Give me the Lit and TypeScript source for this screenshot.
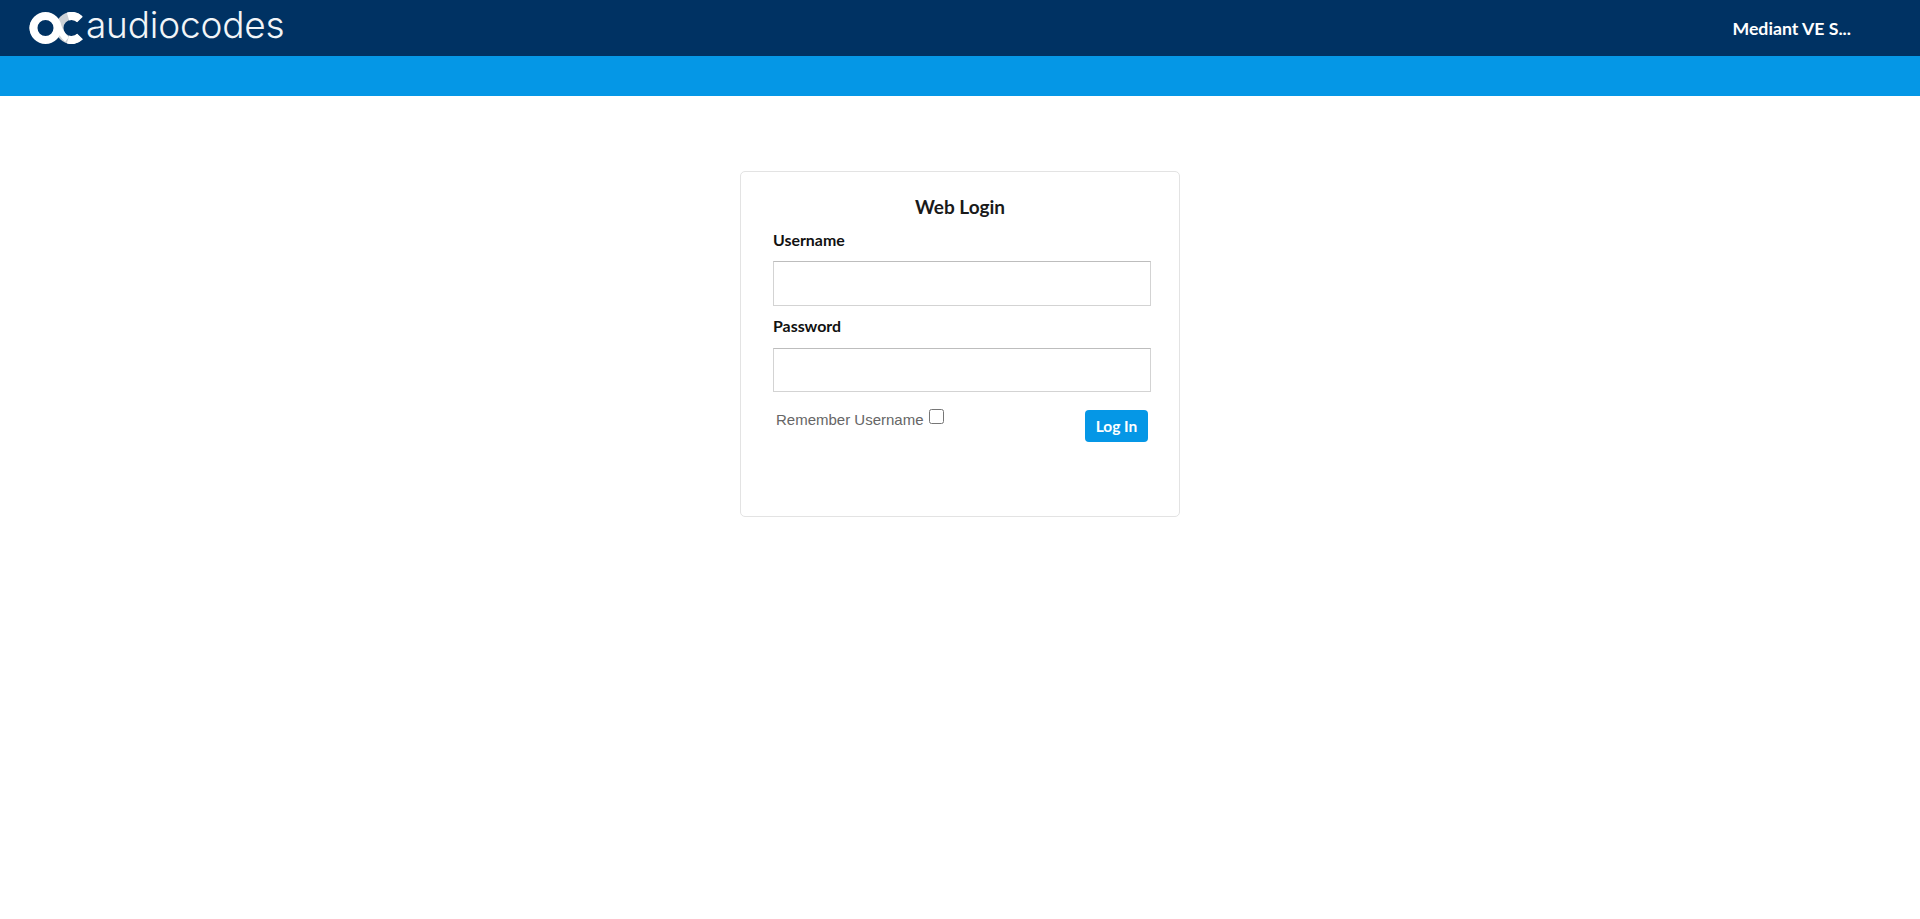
import { LitElement, html, css } from "lit";
import { customElement } from "lit/decorators.js";

@customElement("app-root")
export class AppRoot extends LitElement {
  static styles = css`
    :host { display: block; min-height: 919px; background: #fff; font-family: "Lato", "Open Sans", sans-serif; color: #111; }
    .top { height: 56px; background: #003263; display: flex; align-items: flex-start; justify-content: space-between; }
    .brand { display: flex; align-items: flex-start; padding: 12px 0 0 28px; color: #f2f5f8; }
    .mark { display: block; width: 58px; height: 32px; }
    .word { font-family: "Inter", sans-serif; font-size: 37px; font-weight: 300; line-height: 32px; margin: -3px 0 0 0; letter-spacing: -0.2px; }
    .device { color: #fff; font-size: 17.7px; font-weight: 700; line-height: 20px; margin: 19px 69px 0 0; white-space: nowrap; }
    .band { height: 40px; background: #0597e6; }
    .card { box-sizing: border-box; width: 440px; height: 346px; margin: 75px auto 0; padding: 24px 28px 0 32px; border: 1px solid #e3e3e3; border-radius: 5px; }
    h1 { margin: 0 0 13px; font-size: 19px; line-height: 22px; font-weight: 700; text-align: center; color: #1a1a1a; padding-right: 4px; }
    label.field { display: block; font-size: 15.9px; line-height: 18px; font-weight: 700; margin-bottom: 12px; }
    label.lower { margin-bottom: 13px; }
    input.text { display: block; box-sizing: border-box; width: 378px; height: 45px; margin: 0 0 11px; border: 1px solid #d3d3d3; border-top-color: #bdbdbd; background: #fff; padding: 0 8px; outline: none; }
    input.pw { height: 44px; margin-bottom: 10px; }
    .row { display: flex; justify-content: space-between; align-items: flex-start; margin-top: 19px; padding: 0 3px; width: 372px; }
    .remember { display: flex; align-items: flex-start; font-family: "Liberation Sans", Arial, sans-serif; font-size: 15px; line-height: 17px; color: #666; }
    .remember input { width: 15px; height: 15px; margin: -2px 0 0 5px; }
    .login { box-sizing: border-box; width: 63px; height: 32px; border: 0; border-radius: 4px; background: #0597e6; color: #fff; font: 700 15.5px/32px "Lato", sans-serif; padding: 0; margin-top: -1px; }
  `;
  render() {
    return html`
      <header class="top">
        <div class="brand">
          <svg class="mark" viewBox="0 0 58 32" fill="none" aria-hidden="true">
            <circle cx="43.5" cy="16" r="12" stroke="#ccd1d6" stroke-width="8" stroke-dasharray="55.5 20" stroke-dashoffset="-9.4"/>
            <path d="M40 27.5A12 12 0 0 0 52 24.5M40 4.5A12 12 0 0 1 52 7.5" stroke="#fff" stroke-width="8"/>
            <circle cx="17.5" cy="16" r="12" stroke="#fff" stroke-width="8"/>
            <path d="M3 16A14 14 0 0 1 8 6M3 16A14 14 0 0 0 8 26" stroke="#fff" stroke-width="3"/>
            <path d="M27 8C31 14 32 22 39 27.5" stroke="#fff" stroke-width="6"/>
          </svg>
          <span class="word">audiocodes</span>
        </div>
        <div class="device">Mediant VE S...</div>
      </header>
      <div class="band"></div>
      <form class="card">
        <h1>Web Login</h1>
        <label class="field" for="u">Username</label>
        <input class="text" id="u" type="text" />
        <label class="field lower" for="p">Password</label>
        <input class="text pw" id="p" type="password" />
        <div class="row">
          <label class="remember">Remember Username <input type="checkbox" /></label>
          <button class="login" type="button">Log In</button>
        </div>
      </form>
    `;
  }
}
